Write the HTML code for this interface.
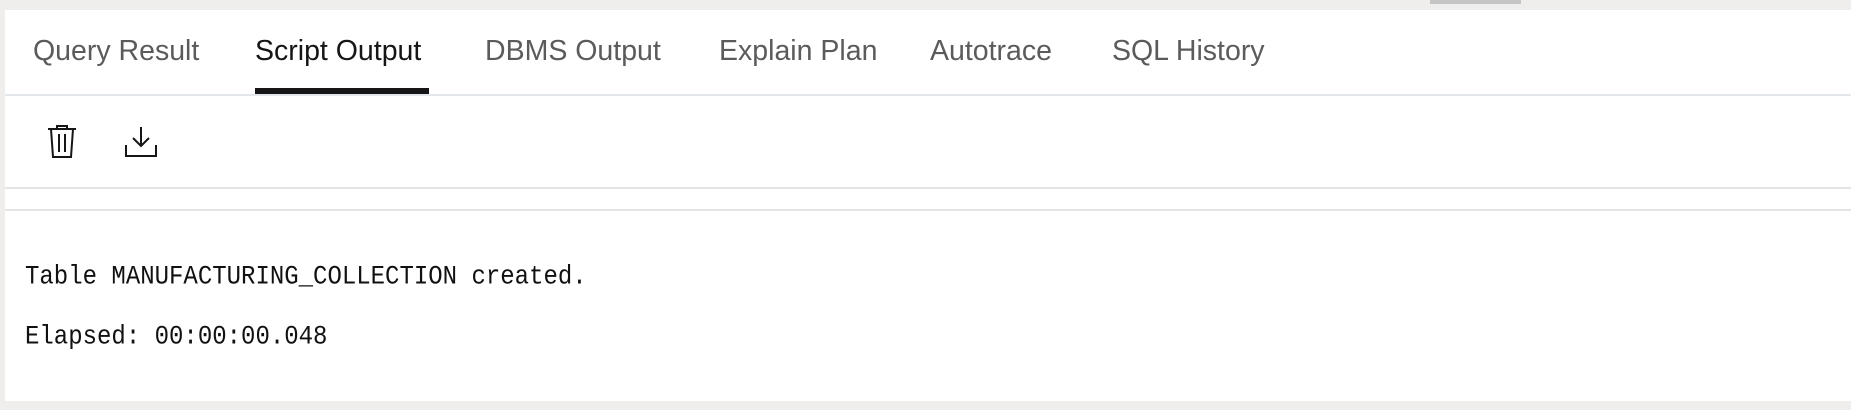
<!DOCTYPE html>
<html><head><meta charset="utf-8"><style>
body{margin:0;width:1851px;height:410px;background:#efeeed;position:relative;overflow:hidden;font-family:"Liberation Sans",sans-serif}
.panel{position:absolute;left:5px;top:10px;width:1846px;height:391px;background:#fff}
.tab{position:absolute;top:35px;font-size:28.5px;color:#5b5b5b;white-space:nowrap}
.line{position:absolute;left:5px;width:1846px;height:2px}
.mono{position:absolute;left:25px;font-family:"Liberation Mono",monospace;font-size:24px;color:#111;transform:scaleY(1.12);transform-origin:0 0;white-space:pre}
</style></head><body>
<div style="position:absolute;left:1430px;top:0;width:91px;height:4px;background:#c4c4c4"></div>
<div class="panel"></div>
<div class="tab" style="left:33px">Query Result</div>
<div class="tab" style="left:255px;color:#161616">Script Output</div>
<div class="tab" style="left:485px">DBMS Output</div>
<div class="tab" style="left:719px">Explain Plan</div>
<div class="tab" style="left:930px">Autotrace</div>
<div class="tab" style="left:1112px">SQL History</div>
<div style="position:absolute;left:255px;top:88px;width:174px;height:6px;background:#161616"></div>
<div class="line" style="top:94px;background:#e3e7eb"></div>
<svg style="position:absolute;left:44px;top:124px" width="36" height="36" viewBox="0 0 36 36" fill="none" stroke="#161616" stroke-width="2">
<path d="M4 5H32M13 5V2H23V5M7 5L9 33H27L29 5M15 10V28M21 10V28"/></svg>
<svg style="position:absolute;left:123px;top:124px" width="36" height="36" viewBox="0 0 36 36" fill="none" stroke="#161616" stroke-width="2">
<path d="M18 3V22M10 14L18 22L26 14M3 21V32H33V21"/></svg>
<div class="line" style="top:187px;background:#e4e4e4"></div>
<div class="line" style="top:209px;background:#e4e4e4"></div>
<div class="mono" style="top:262px">Table MANUFACTURING_COLLECTION created.</div>
<div class="mono" style="top:322px">Elapsed: 00:00:00.048</div>
</body></html>
